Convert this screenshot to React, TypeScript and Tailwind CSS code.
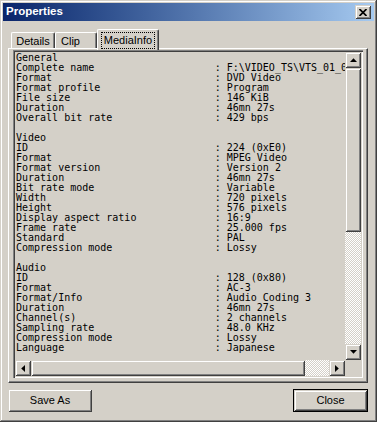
import React from "react";

const rows: [string, string?][] = [
  ["General"],
  ["Complete name", "F:\\VIDEO_TS\\VTS_01_0.IFO"],
  ["Format", "DVD Video"],
  ["Format profile", "Program"],
  ["File size", "146 KiB"],
  ["Duration", "46mn 27s"],
  ["Overall bit rate", "429 bps"],
  [""],
  ["Video"],
  ["ID", "224 (0xE0)"],
  ["Format", "MPEG Video"],
  ["Format version", "Version 2"],
  ["Duration", "46mn 27s"],
  ["Bit rate mode", "Variable"],
  ["Width", "720 pixels"],
  ["Height", "576 pixels"],
  ["Display aspect ratio", "16:9"],
  ["Frame rate", "25.000 fps"],
  ["Standard", "PAL"],
  ["Compression mode", "Lossy"],
  [""],
  ["Audio"],
  ["ID", "128 (0x80)"],
  ["Format", "AC-3"],
  ["Format/Info", "Audio Coding 3"],
  ["Duration", "46mn 27s"],
  ["Channel(s)", "2 channels"],
  ["Sampling rate", "48.0 KHz"],
  ["Compression mode", "Lossy"],
  ["Language", "Japanese"],
];

const raised =
  "shadow-[inset_1px_1px_#d4d0c8,inset_-1px_-1px_#404040,inset_2px_2px_#ffffff,inset_-2px_-2px_#808080]";

function ArrowUp() {
  return (
    <svg width="7" height="4" viewBox="0 0 7 4">
      <polygon points="0,4 7,4 3.5,0.2" fill="#000" />
    </svg>
  );
}
function ArrowDown() {
  return (
    <svg width="7" height="4" viewBox="0 0 7 4">
      <polygon points="0,0 7,0 3.5,3.8" fill="#000" />
    </svg>
  );
}
function ArrowLeft() {
  return (
    <svg width="4" height="7" viewBox="0 0 4 7">
      <polygon points="4,0 4,7 0.2,3.5" fill="#000" />
    </svg>
  );
}
function ArrowRight() {
  return (
    <svg width="4" height="7" viewBox="0 0 4 7">
      <polygon points="0,0 0,7 3.8,3.5" fill="#000" />
    </svg>
  );
}

export default function App() {
  const check =
    "bg-[image:repeating-conic-gradient(#ffffff_0%_25%,#d4d0c8_0%_50%)] bg-[size:2px_2px]";
  return (
    <div
      className="w-[377px] h-[422px] bg-[#d4d0c8] p-[3px] flex flex-col shadow-[inset_-1px_-1px_#404040,inset_1px_1px_#d4d0c8,inset_-2px_-2px_#808080,inset_2px_2px_#ffffff] overflow-hidden"
      style={{ fontFamily: '"Liberation Sans", Arial, sans-serif' }}
    >
      {/* Title bar */}
      <div className="h-[18px] flex items-center justify-between pl-[3px] pr-[3px] bg-gradient-to-r from-[#0a246a] to-[#a6caf0]">
        <span className="text-white font-bold text-[11.5px] leading-none">Properties</span>
        <div className={`w-[16px] h-[14px] bg-[#d4d0c8] flex items-center justify-center ${raised}`}>
          <svg width="8" height="7" viewBox="0 0 8 7">
            <path d="M0.5 0 L7.5 7 M7.5 0 L0.5 7" stroke="#000" strokeWidth="1.7" />
          </svg>
        </div>
      </div>

      {/* Tabs */}
      <div className="mt-[8px] pl-[8px] h-[19px] flex items-end relative z-10 text-[11px] text-black">
        <div className="w-[44px] h-[16px] border-t border-l border-white border-r border-r-[#404040] rounded-tl-[2px] rounded-tr-[2px] shadow-[inset_-1px_0_#808080] flex items-center justify-center pt-[1px]">
          Details
        </div>
        <div className="w-[42px] h-[16px] border-t border-l border-white border-r border-r-[#404040] rounded-tl-[2px] rounded-tr-[2px] shadow-[inset_-1px_0_#808080] flex items-center pl-[5px] pt-[1px]">
          Clip
        </div>
        <div className="w-[62px] h-[21px] -mb-[2px] bg-[#d4d0c8] border-t border-l border-white border-r border-r-[#404040] rounded-tl-[2px] rounded-tr-[2px] shadow-[inset_-1px_0_#808080] flex items-start justify-center pt-[2px]">
          <span className="border border-dotted border-black px-[2px] h-[17px] flex items-center leading-none">MediaInfo</span>
        </div>
      </div>

      {/* Panel */}
      <div className="ml-[5px] w-[360px] h-[335px] border-t border-l border-white border-r border-b border-r-[#404040] border-b-[#404040] shadow-[inset_-1px_-1px_#808080] pl-[4px] pt-[1px]">
        <div className="w-[350px] h-[328px] p-[2px] shadow-[inset_1px_1px_#808080,inset_2px_2px_#404040,inset_-1px_-1px_#ffffff,inset_-2px_-2px_#d4d0c8]">
          <div className="grid grid-cols-[330px_16px] grid-rows-[308px_16px] w-[346px] h-[324px]">
            <div
              className="overflow-hidden pl-[1px] pt-[1px] text-[10px] leading-[10px] text-black whitespace-pre"
              style={{ fontFamily: '"DejaVu Sans Mono", "Liberation Mono", monospace' }}
            >
              {rows.map(([label, value], i) => (
                <div key={i} className="h-[10px]">
                  {value !== undefined ? label.padEnd(33) + ": " + value : label}
                </div>
              ))}
            </div>
            {/* vertical scrollbar */}
            <div className="flex flex-col">
              <div className={`h-[16px] bg-[#d4d0c8] flex items-center justify-center ${raised}`}>
                <ArrowUp />
              </div>
              <div className={`h-[164px] bg-[#d4d0c8] ${raised}`} />
              <div className={`flex-1 ${check}`} />
              <div className={`h-[16px] bg-[#d4d0c8] flex items-center justify-center ${raised}`}>
                <ArrowDown />
              </div>
            </div>
            {/* horizontal scrollbar */}
            <div className="flex">
              <div className={`w-[16px] bg-[#d4d0c8] flex items-center justify-center ${raised}`}>
                <ArrowLeft />
              </div>
              <div className={`w-[274px] bg-[#d4d0c8] ${raised}`} />
              <div className={`flex-1 ${check}`} />
              <div className={`w-[16px] bg-[#d4d0c8] flex items-center justify-center ${raised}`}>
                <ArrowRight />
              </div>
            </div>
            <div className="bg-[#d4d0c8]" />
          </div>
        </div>
      </div>

      {/* Buttons */}
      <div className="mt-[6px] ml-[5px] w-[360px] flex justify-between text-[11px] text-black">
        <div className={`w-[84px] h-[23px] flex items-center justify-center ${raised}`}>Save As</div>
        <div className="w-[75px] h-[23px] border border-black">
          <div className={`w-full h-full flex items-center justify-center ${raised}`}>Close</div>
        </div>
      </div>
    </div>
  );
}
